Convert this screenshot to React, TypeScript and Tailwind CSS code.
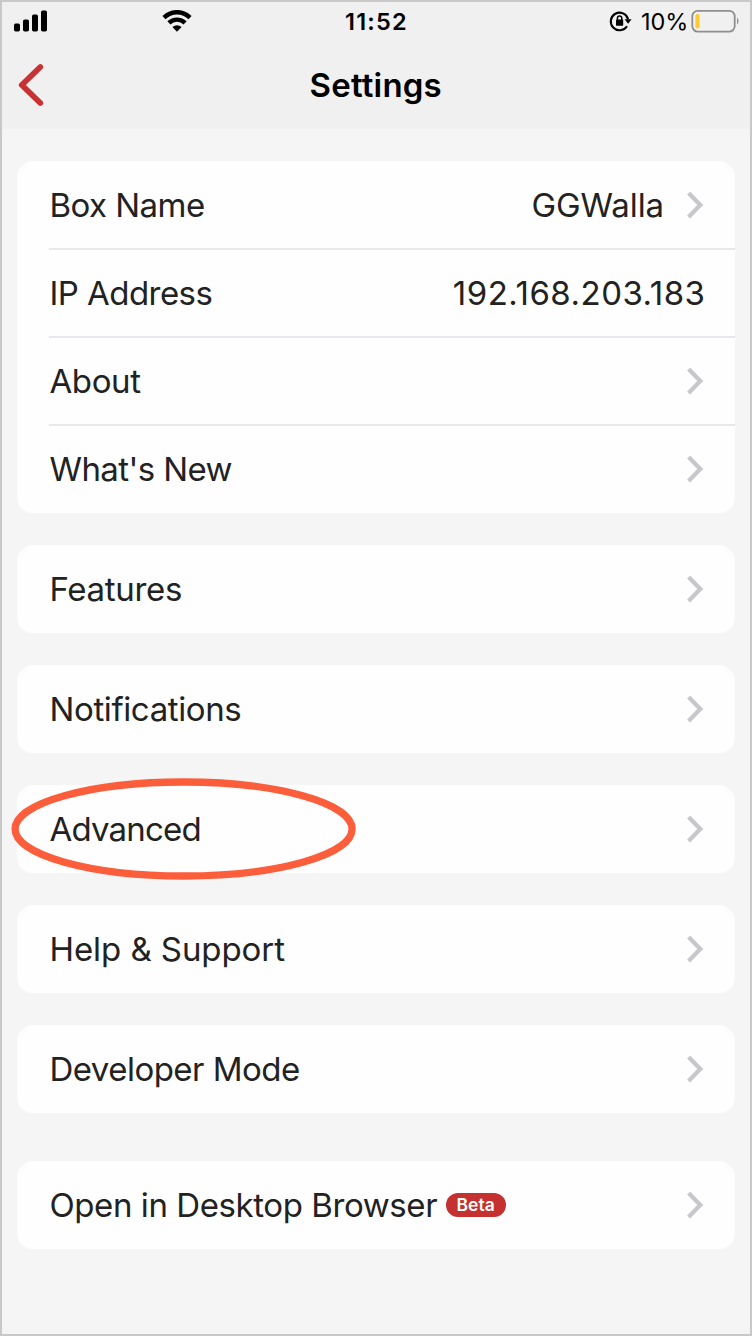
import type { ReactNode } from "react";

function Chevron() {
  return (
    <svg className="h-7 w-[18px] shrink-0" viewBox="0 0 18 28" fill="none">
      <path d="M1.6 2L13.3 14L1.6 26" stroke="#c7c7cb" strokeWidth="4.2" />
    </svg>
  );
}

function Row({
  label,
  spacing,
  value,
  chevron = true,
  frame = "h-[88px]",
  badge,
}: {
  label: string;
  spacing: string;
  value?: ReactNode;
  chevron?: boolean;
  frame?: string;
  badge?: ReactNode;
}) {
  return (
    <div className="pl-8">
      <div className={`flex items-center border-[#e8e9ee] pr-[30px] pl-[0.5px] ${frame}`}>
        <span className={`whitespace-nowrap ${spacing}`}>{label}</span>
        {badge}
        <span className="ml-auto flex items-center">
          {value}
          {chevron && <Chevron />}
        </span>
      </div>
    </div>
  );
}

function Card({ children }: { children: ReactNode }) {
  return <section className="rounded-2xl bg-[#fefefe]">{children}</section>;
}

function StatusBar() {
  return (
    <div className="flex h-[38px] items-center text-black">
      <svg className="mb-px ml-3 h-[22px] w-[34px]" viewBox="0 0 34 22">
        <rect x="0" y="13.5" width="6" height="8" rx="1.7" />
        <rect x="9" y="9.5" width="6" height="12" rx="1.7" />
        <rect x="18" y="4.5" width="6" height="17" rx="1.7" />
        <rect x="27" y="0.5" width="6" height="21" rx="1.7" />
      </svg>
      <svg className="ml-[114px] h-[22px] w-[30px]" viewBox="0 0 30 22">
        <path d="M2 7.6A18.3 18.3 0 0 1 28 7.6M6.9 12.9A11.6 11.6 0 0 1 23.1 12.9" fill="none" stroke="black" strokeWidth="4.4" />
        <path d="M10.4 17Q15 13.4 19.6 17L15 21.8Z" />
      </svg>
      <span className="mt-[2px] ml-[153px] w-[64px] whitespace-nowrap text-[23.5px] leading-none font-semibold tracking-[1.2px]">11:52</span>
      <svg className="ml-[200px] h-[22px] w-[24px]" viewBox="0 0 24 22" fill="none">
        <path d="M18 16.2A8.8 8.8 0 1 1 19.1 9.2" stroke="black" strokeWidth="2.1" />
        <path d="M15.6 9.2H22.6L19.1 13.8Z" fill="black" />
        <rect x="7" y="9.6" width="7.2" height="6.2" rx="0.9" fill="black" />
        <path d="M8.4 10V8.2A2.2 2.2 0 0 1 12.8 8.2V10" stroke="black" strokeWidth="1.5" />
      </svg>
      <span className="mt-[2px] ml-[8px] w-[46px] whitespace-nowrap text-[23.5px] leading-none tracking-[-0.1px]">10%</span>
      <svg className="mb-px ml-[4px] h-6 w-[50px]" viewBox="0 0 50 24" fill="none">
        <rect x="1.3" y="1.8" width="42.4" height="20.8" rx="5.5" stroke="#8e8e8e" strokeWidth="1.8" />
        <rect x="4.4" y="5" width="4.2" height="14.5" rx="1.8" fill="#fecb2f" />
        <path d="M46 8.6Q49 12.2 46 15.8Z" fill="#8e8e8e" />
      </svg>
    </div>
  );
}

export default function App() {
  return (
    <main className="relative flex h-[1336px] w-[752px] flex-col border-2 border-[#c8c8c8] bg-[#f5f5f5] font-['Inter','Liberation_Sans',sans-serif] text-[33px] leading-none text-[#222222]">
      <header className="h-[127px] bg-[#f0f0f0]">
        <StatusBar />
        <div className="flex h-[90px] items-center">
          <svg className="ml-4 h-[44px] w-7" viewBox="0 0 28 44" fill="none">
            <path d="M22.3 4L3.8 22L22.3 40" stroke="#c83232" strokeWidth="5.8" strokeLinecap="round" strokeLinejoin="round" />
          </svg>
          <h1 className="ml-[263.5px] whitespace-nowrap text-[33px] font-semibold tracking-[0.2px] text-black">Settings</h1>
        </div>
      </header>

      <div className="flex flex-col gap-8 pr-[15px] pt-8 pl-[15px]">
        <Card>
          <Row
            label="Box Name"
            spacing="tracking-[-0.55px]"
            frame="h-[89px] border-b-2 pt-px"
            value={<span className="mr-[23px] tracking-[-0.1px]">GGWalla</span>}
          />
          <Row
            label="IP Address"
            spacing="tracking-[-0.55px]"
            frame="h-[88px] border-b-2"
            chevron={false}
            value={<span className="-mr-[0.5px] tracking-[0.5px]">192.168.203.183</span>}
          />
          <Row label="About" spacing="tracking-[-0.4px]" frame="h-[88px] border-b-2" />
          <Row label="What's New" spacing="tracking-[-0.6px]" frame="h-[87px] pb-px" />
        </Card>
        <Card>
          <Row label="Features" spacing="tracking-[-0.33px]" />
        </Card>
        <Card>
          <Row label="Notifications" spacing="tracking-[-0.38px]" />
        </Card>
        <div className="relative">
          <Card>
            <Row label="Advanced" spacing="tracking-[-0.82px]" />
          </Card>
          <svg className="pointer-events-none absolute -top-[7px] -left-[6px] h-[102px] w-[346px]" viewBox="0 0 346 102" fill="none">
            <ellipse cx="172.6" cy="51" rx="168.5" ry="47" stroke="#fc5d3b" strokeWidth="7.3" />
          </svg>
        </div>
        <Card>
          <Row label="Help & Support" spacing="tracking-[-0.07px]" />
        </Card>
        <Card>
          <Row label="Developer Mode" spacing="tracking-[-0.53px]" />
        </Card>
        <div className="mt-4">
          <Card>
            <Row
              label="Open in Desktop Browser"
              spacing="tracking-[-0.42px]"
              badge={
                <span className="ml-[8.5px] flex h-6 w-[60px] items-center justify-center rounded-full bg-[#c53030] text-[17.5px] font-semibold text-white">
                  Beta
                </span>
              }
            />
          </Card>
        </div>
      </div>
    </main>
  );
}
